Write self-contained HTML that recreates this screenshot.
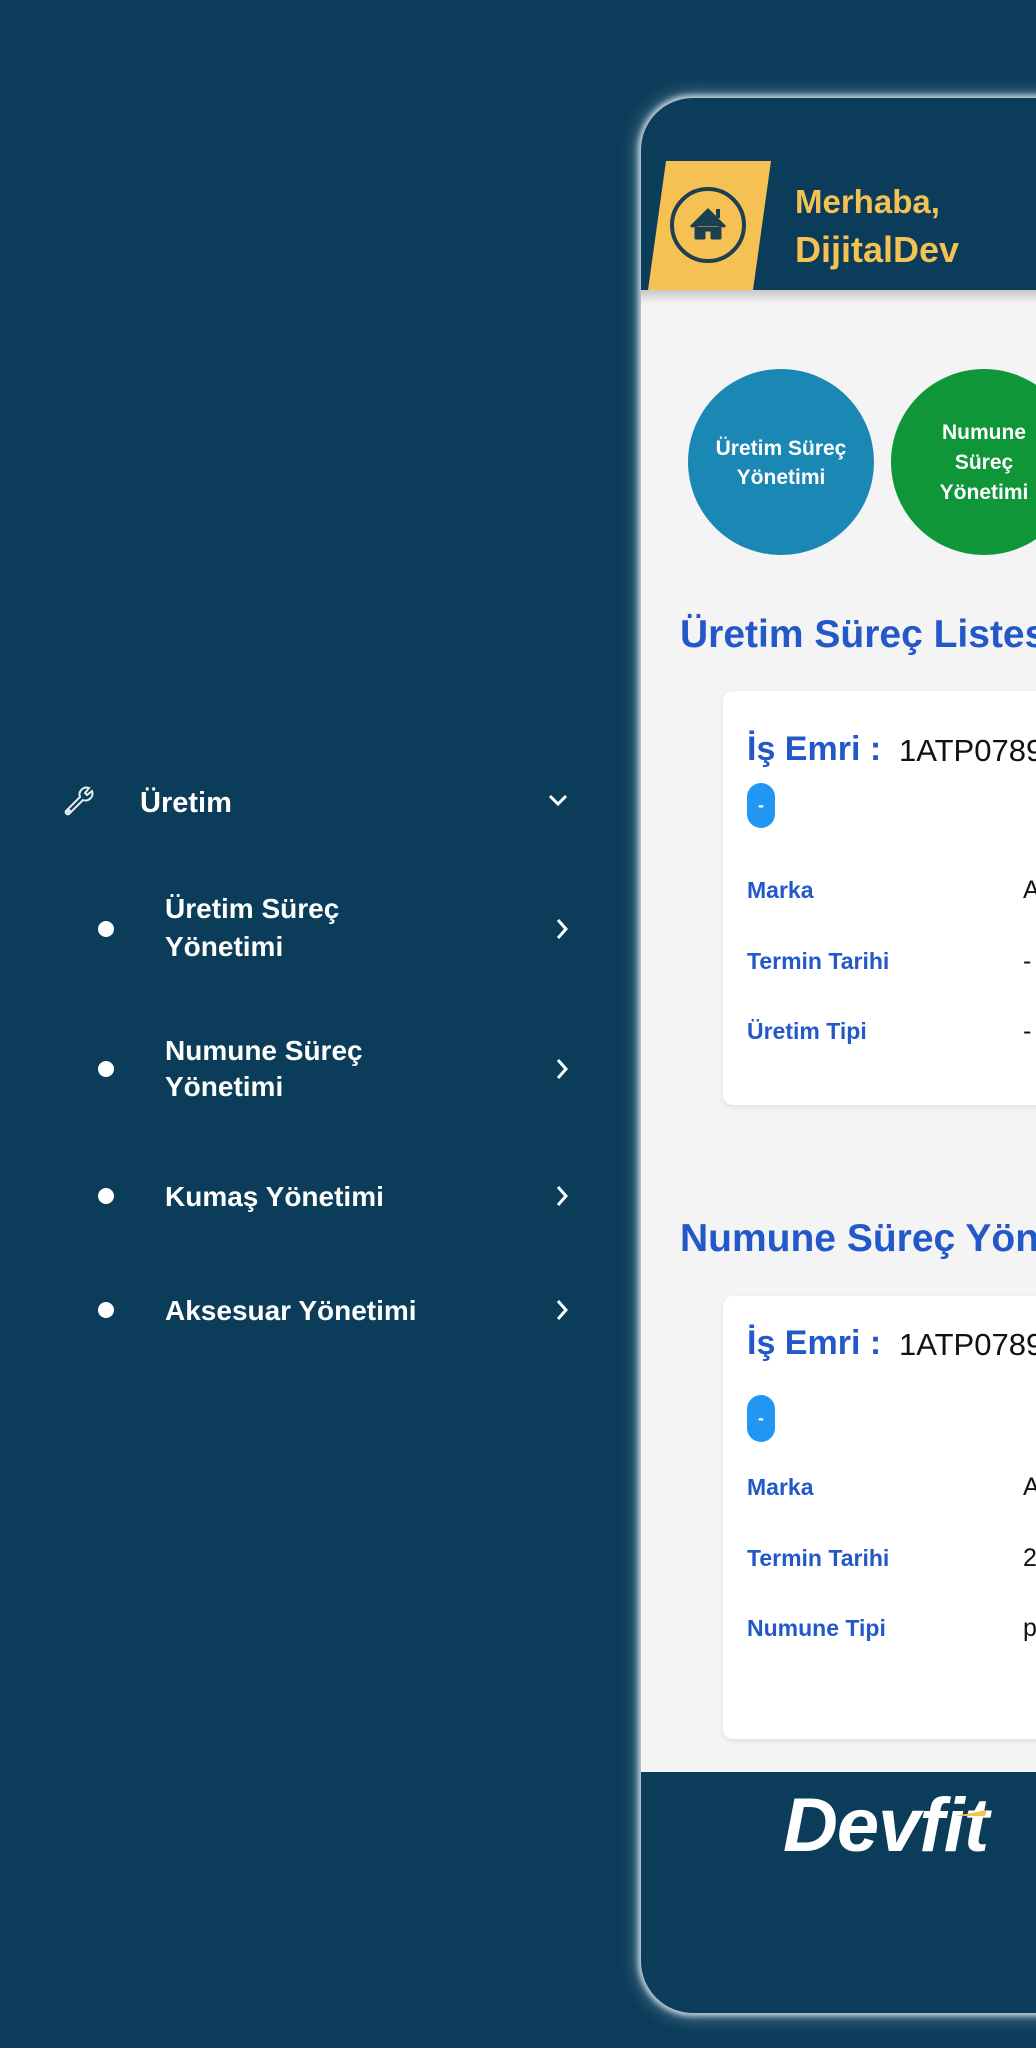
<!DOCTYPE html>
<html><head><meta charset="utf-8"><style>
*{margin:0;padding:0;box-sizing:border-box}
body{width:1036px;height:2048px;background:#0b3d5a;position:relative;overflow:hidden;font-family:"Liberation Sans",sans-serif}
.a{position:absolute;line-height:1;white-space:nowrap}
.side{color:#fff;font-size:28px;font-weight:bold}
.dot{position:absolute;width:16px;height:16px;border-radius:50%;background:#fff}
.phone{position:absolute;left:641px;top:98px;width:460px;height:1915px;border-radius:52px;background:#0b3d5a;overflow:hidden;box-shadow:0 0 6px 3px rgba(220,230,236,.85),0 0 16px 6px rgba(200,215,225,.35)}
.lbl{color:#2358c8;font-size:23px;font-weight:bold}
.val{color:#111;font-size:25px}
</style></head><body>

<svg style="position:absolute;left:62px;top:784px" width="34" height="34" viewBox="0 0 34 34" fill="none" stroke="#e6eef2" stroke-width="2">
<path d="M4 27 L18 13 A7 7 0 0 1 27 4 L23 9 L25 11 L30 7 A7 7 0 0 1 21 16 L7 30 A2.2 2.2 0 0 1 4 27 Z"/>
<circle cx="7" cy="27.5" r="1.2"/>
</svg>
<div class="a side" style="left:140px;top:789px;font-size:29px">Üretim</div>
<svg style="position:absolute;left:547px;top:792px" width="22" height="16" viewBox="0 0 22 16"><path d="M3 4 L11 12 L19 4" fill="none" stroke="#fff" stroke-width="3"/></svg>

<div class="dot" style="left:98px;top:921px"></div>
<div class="a side" style="left:165px;top:895px">Üretim Süreç</div>
<div class="a side" style="left:165px;top:933px">Yönetimi</div>
<svg style="position:absolute;left:554px;top:917px" width="16" height="24" viewBox="0 0 16 24"><path d="M4 3 L12 12 L4 21" fill="none" stroke="#fff" stroke-width="3"/></svg>

<div class="dot" style="left:98px;top:1061px"></div>
<div class="a side" style="left:165px;top:1037px">Numune Süreç</div>
<div class="a side" style="left:165px;top:1073px">Yönetimi</div>
<svg style="position:absolute;left:554px;top:1057px" width="16" height="24" viewBox="0 0 16 24"><path d="M4 3 L12 12 L4 21" fill="none" stroke="#fff" stroke-width="3"/></svg>

<div class="dot" style="left:98px;top:1188px"></div>
<div class="a side" style="left:165px;top:1183px">Kumaş Yönetimi</div>
<svg style="position:absolute;left:554px;top:1184px" width="16" height="24" viewBox="0 0 16 24"><path d="M4 3 L12 12 L4 21" fill="none" stroke="#fff" stroke-width="3"/></svg>

<div class="dot" style="left:98px;top:1302px"></div>
<div class="a side" style="left:165px;top:1297px">Aksesuar Yönetimi</div>
<svg style="position:absolute;left:554px;top:1298px" width="16" height="24" viewBox="0 0 16 24"><path d="M4 3 L12 12 L4 21" fill="none" stroke="#fff" stroke-width="3"/></svg>

<div class="phone">
  <div style="position:absolute;left:0;top:192px;width:460px;height:1482px;background:#f4f4f4"></div>
  <div style="position:absolute;left:0;top:192px;width:460px;height:14px;background:linear-gradient(rgba(0,0,0,.18),rgba(0,0,0,0))"></div>
  <svg style="position:absolute;left:0;top:0" width="200" height="200">
    <polygon points="25,63 130,63 112,192 7,192" fill="#f4c152"/>
    <circle cx="67" cy="127" r="36" fill="none" stroke="#1d3f52" stroke-width="4"/>
    <path d="M50 129 L67 112 L84 129 M55 127 V140 H63 V132 H71 V140 H79 V127 Z" fill="#1d3f52" stroke="#1d3f52" stroke-width="3" stroke-linejoin="round"/>
    <rect x="75" y="111" width="4" height="9" fill="#1d3f52"/>
  </svg>
  <div class="a" style="left:154px;top:87px;color:#f4c152;font-size:33px;font-weight:bold">Merhaba,</div>
  <div class="a" style="left:154px;top:134px;color:#f4c152;font-size:36px;font-weight:bold">DijitalDev</div>

  <div style="position:absolute;left:47px;top:271px;width:186px;height:186px;border-radius:50%;background:#1a87b5"></div>
  <div class="a" style="left:47px;top:336px;width:186px;text-align:center;color:#fff;font-size:21px;font-weight:bold;line-height:29px">Üretim Süreç<br>Yönetimi</div>
  <div style="position:absolute;left:250px;top:271px;width:186px;height:186px;border-radius:50%;background:#0f9639"></div>
  <div class="a" style="left:250px;top:320px;width:186px;text-align:center;color:#fff;font-size:21px;font-weight:bold;line-height:30px">Numune<br>Süreç<br>Yönetimi</div>

  <div class="a" style="left:39px;top:517px;color:#2358c8;font-size:39px;font-weight:bold">Üretim Süreç Listesi</div>
  <div style="position:absolute;left:82px;top:593px;width:420px;height:414px;background:#fff;border-radius:10px;box-shadow:0 2px 6px rgba(0,0,0,.08)">
    <div class="a" style="left:24px;top:41px;color:#2358c8;font-size:34px;font-weight:bold">İş Emri :</div>
    <div class="a" style="left:176px;top:44px;color:#111;font-size:31px">1ATP0789</div>
    <div style="position:absolute;left:24px;top:92px;width:28px;height:45px;border-radius:14px;background:#2196f3;color:#fff;font-size:18px;font-weight:bold;text-align:center;line-height:45px">-</div>
  </div>
  <div class="a lbl" style="left:106px;top:781px">Marka</div>
  <div class="a val" style="left:382px;top:780px">A</div>
  <div class="a lbl" style="left:106px;top:852px">Termin Tarihi</div>
  <div class="a val" style="left:382px;top:851px">-</div>
  <div class="a lbl" style="left:106px;top:922px">Üretim Tipi</div>
  <div class="a val" style="left:382px;top:921px">-</div>

  <div class="a" style="left:39px;top:1121px;color:#2358c8;font-size:39px;font-weight:bold">Numune Süreç Yönetimi</div>
  <div style="position:absolute;left:82px;top:1198px;width:420px;height:443px;background:#fff;border-radius:10px;box-shadow:0 2px 6px rgba(0,0,0,.08)">
    <div class="a" style="left:24px;top:30px;color:#2358c8;font-size:34px;font-weight:bold">İş Emri :</div>
    <div class="a" style="left:176px;top:33px;color:#111;font-size:31px">1ATP0789</div>
    <div style="position:absolute;left:24px;top:99px;width:28px;height:47px;border-radius:14px;background:#2196f3;color:#fff;font-size:18px;font-weight:bold;text-align:center;line-height:47px">-</div>
  </div>
  <div class="a lbl" style="left:106px;top:1378px">Marka</div>
  <div class="a val" style="left:382px;top:1377px">A</div>
  <div class="a lbl" style="left:106px;top:1449px">Termin Tarihi</div>
  <div class="a val" style="left:382px;top:1448px">2</div>
  <div class="a lbl" style="left:106px;top:1519px">Numune Tipi</div>
  <div class="a val" style="left:382px;top:1518px">p</div>

  <div class="a" style="left:142px;top:1690px;color:#fff;font-size:76px;font-weight:900;font-style:italic;letter-spacing:-1px">Devfit</div>
  <svg style="position:absolute;left:300px;top:1708px" width="60" height="20"><polygon points="14,10 46,4 44,10" fill="#f4c152"/></svg>
</div>
</body></html>
